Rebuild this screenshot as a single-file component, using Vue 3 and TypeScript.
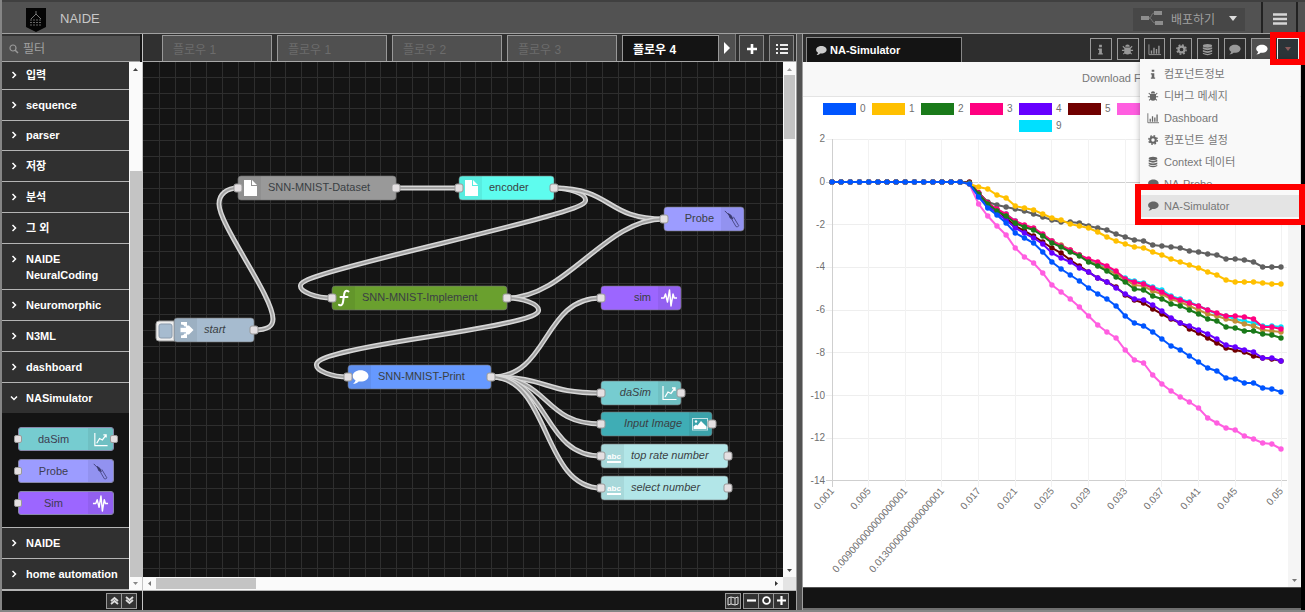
<script setup lang="ts">
import { ref } from 'vue'

interface FlowNode {
  id: string
  label: string
  x: number
  y: number
  w: number
  color: string
  icon: string
  side: 'left' | 'right'
  italic?: boolean
  input?: boolean
  output?: boolean
}

const NODE_W = 79
const NODE_H = 24
const GRID = 15.83

const nodes: FlowNode[] = [
  { id: 'start', label: 'start', x: 31, y: 256, w: 80, color: '#a6bbcf', icon: 'inject', side: 'left', italic: true, output: true },
  { id: 'dataset', label: 'SNN-MNIST-Dataset', x: 95, y: 114, w: 158, color: '#999999', icon: 'file', side: 'left', input: true, output: true },
  { id: 'encoder', label: 'encoder', x: 316, y: 114, w: 95, color: '#5efcee', icon: 'file', side: 'left', input: true, output: true },
  { id: 'probe', label: 'Probe', x: 521, y: 145, w: 80, color: '#9c9cff', icon: 'probe', side: 'right', input: true },
  { id: 'implement', label: 'SNN-MNIST-Implement', x: 189, y: 224, w: 175, color: '#6aa02e', icon: 'fn', side: 'left', input: true, output: true },
  { id: 'sim', label: 'sim', x: 458, y: 224, w: 80, color: '#9c66ff', icon: 'pulse', side: 'right', input: true },
  { id: 'print', label: 'SNN-MNIST-Print', x: 205, y: 303, w: 143, color: '#6699ff', icon: 'comment', side: 'left', input: true, output: true },
  { id: 'dasim', label: 'daSim', x: 458, y: 319, w: 80, color: '#76ccd0', icon: 'chart', side: 'right', italic: true, input: true, output: true },
  { id: 'image', label: 'Input Image', x: 458, y: 350, w: 111, color: '#3fadb5', icon: 'image', side: 'right', italic: true, input: true, output: true },
  { id: 'top', label: 'top rate number', x: 458, y: 382, w: 127, color: '#b2e6e8', icon: 'abc', side: 'left', italic: true, input: true, output: true },
  { id: 'select', label: 'select number', x: 458, y: 414, w: 127, color: '#b2e6e8', icon: 'abc', side: 'left', italic: true, input: true, output: true },
]

const links: [string, string][] = [
  ['start', 'dataset'], ['dataset', 'encoder'], ['encoder', 'implement'], ['encoder', 'probe'],
  ['implement', 'probe'], ['implement', 'print'], ['print', 'sim'], ['print', 'dasim'],
  ['print', 'image'], ['print', 'top'], ['print', 'select'],
]

function wire(ox: number, oy: number, tx: number, ty: number): string {
  const dx = tx - ox
  const dy = ty - oy
  const delta = Math.sqrt(dx * dx + dy * dy)
  if (dx > 0) {
    const s = delta < NODE_W ? 0.75 - 0.75 * ((NODE_W - delta) / NODE_W) : 0.75
    return `M${ox} ${oy}C${ox + NODE_W * s} ${oy} ${tx - NODE_W * s} ${ty} ${tx} ${ty}`
  }
  const s = 0.4 - 0.2 * Math.max(0, (NODE_W - Math.min(Math.abs(dx), Math.abs(dy))) / NODE_W)
  const down = dy > 0
  const sign = down ? 1 : -1
  const near = down ? Math.min : Math.max
  const far = down ? Math.max : Math.min
  const midX = Math.floor(tx - dx / 2)
  const midY = Math.floor(ty - dy / 2)
  const h = NODE_H / 2
  const y1 = (ty + midY) / 2
  const topX = ox + NODE_W * s
  const topY = near(y1 - dy / 2, oy + sign * h)
  const botX = tx - NODE_W * s
  const botY = far(y1, ty - sign * h)
  const x1 = (ox + topX) / 2
  let c1 = far(oy, topY - sign * h)
  const c2 = near(midY, topY + sign * h)
  let c3 = far(midY, botY - sign * h)
  if (c2 === topY + sign * h) {
    if (Math.abs(dy) < h * 10) c1 = topY - (sign * h) / 2
    c3 = botY - (sign * h) / 2
  }
  return `M${ox} ${oy}C${x1} ${oy} ${topX} ${c1} ${topX} ${topY}S${x1} ${c2} ${midX} ${midY}S${botX} ${c3} ${botX} ${botY}S${(tx + botX) / 2} ${ty} ${tx} ${ty}`
}

const byId = (id: string) => nodes.find((n) => n.id === id)!
const wires = links.map(([a, b]) => {
  const s = byId(a)
  const t = byId(b)
  // The steep return link from start runs nearly straight between its two bends
  if (a === 'start') {
    return 'M111 268C122 268 130 266 130 257C130 234 76 163 76 142C76 132 84 126 95 126'
  }
  return wire(s.x + s.w, s.y + 12, t.x, t.y + 12)
})
const gridLines = Array.from({ length: 120 }, (_, i) => Math.round((i + 1) * GRID))

const tabs = ['플로우 1', '플로우 1', '플로우 2', '플로우 3']
const filter = ref('')

const categories = [
  { name: '입력' }, { name: 'sequence' }, { name: 'parser' }, { name: '저장' }, { name: '분석' },
  { name: '그 외' }, { name: 'NAIDE NeuralCoding', tall: true }, { name: 'Neuromorphic' },
  { name: 'N3ML' }, { name: 'dashboard' }, { name: 'NASimulator', open: true },
  { name: 'NAIDE' }, { name: 'home automation' },
] as { name: string; tall?: boolean; open?: boolean }[]

const paletteNodes = [
  { label: 'daSim', color: '#76ccd0', icon: 'chart', output: true },
  { label: 'Probe', color: '#9c9cff', icon: 'probe', output: false },
  { label: 'Sim', color: '#9c66ff', icon: 'pulse', output: false },
]

const panelTabs = [
  { icon: 'info', label: '컴포넌트정보' },
  { icon: 'bug', label: '디버그 메세지' },
  { icon: 'bars', label: 'Dashboard' },
  { icon: 'cog', label: '컴포넌트 설정' },
  { icon: 'db', label: 'Context 데이터' },
  { icon: 'comment', label: 'NA-Probe' },
  { icon: 'comment', label: 'NA-Simulator' },
]

/* Chart geometry: one sample per millisecond step, fifty samples */
const X0 = 29
const X1 = 478
const xAt = (i: number) => X0 + ((X1 - X0) * i) / 49
const yAt = (v: number) => 85 - v * 21.35
const yTicks = [2, 0, -2, -4, -6, -8, -10, -12, -14]
const xTicks = [
  [0, '0.001'], [4, '0.005'], [8, '0.009000000000000001'], [12, '0.013000000000000001'],
  [16, '0.017'], [20, '0.021'], [24, '0.025'], [28, '0.029'], [32, '0.033'], [36, '0.037'],
  [40, '0.041'], [44, '0.045'], [49, '0.05'],
] as [number, string][]

const palette = ['#0055ff', '#ffc000', '#1a7a1a', '#ff0080', '#6600ff', '#700000', '#ff5ee0', '#606060', '#c09038', '#00e0ff']

/* Plot heights from sample 15 on; earlier samples rest at zero */
const traces: number[][] = [
  [184, 197, 208, 215, 223, 233, 238, 243, 252, 262, 269, 275, 281, 288, 294, 299, 306, 316, 323, 326, 332, 339, 346, 350, 356, 362, 368, 371, 378, 379, 383, 383, 388, 389, 392],
  [184, 187, 189, 195, 198, 206, 208, 210, 214, 218, 220, 224, 226, 228, 232, 237, 241, 244, 247, 248, 252, 255, 259, 262, 265, 268, 272, 275, 280, 282, 282, 282, 283, 284, 284],
  [183, 194, 204, 211, 216, 223, 227, 230, 236, 243, 247, 252, 256, 262, 266, 271, 277, 282, 289, 290, 296, 299, 304, 306, 310, 314, 319, 321, 327, 328, 331, 331, 334, 335, 338],
  [183, 193, 203, 209, 214, 221, 225, 228, 234, 241, 246, 250, 255, 259, 262, 266, 271, 279, 282, 284, 288, 292, 297, 300, 303, 306, 310, 313, 316, 316, 317, 319, 327, 327, 329],
  [183, 196, 206, 213, 220, 228, 233, 238, 244, 253, 258, 262, 268, 272, 278, 282, 288, 294, 299, 300, 305, 311, 318, 323, 326, 330, 334, 339, 345, 347, 350, 352, 358, 358, 361],
  [182, 193, 203, 210, 218, 226, 231, 236, 242, 248, 253, 260, 266, 272, 278, 282, 287, 295, 300, 303, 309, 314, 319, 323, 329, 333, 338, 343, 348, 350, 352, 356, 358, 359, 361],
  [184, 204, 216, 226, 235, 248, 257, 263, 273, 285, 292, 299, 307, 316, 325, 332, 338, 350, 360, 363, 375, 384, 391, 397, 402, 408, 418, 423, 428, 430, 436, 439, 443, 444, 449],
  [183, 193, 202, 205, 207, 209, 211, 214, 217, 220, 222, 222, 223, 226, 228, 230, 234, 237, 240, 241, 245, 246, 247, 248, 251, 252, 254, 255, 259, 259, 260, 262, 267, 267, 267],
  [183, 193, 203, 210, 215, 222, 226, 229, 235, 241, 245, 250, 255, 261, 265, 269, 274, 280, 285, 286, 291, 294, 299, 302, 306, 310, 314, 316, 319, 321, 324, 326, 330, 331, 332],
  [183, 193, 203, 210, 214, 221, 226, 229, 235, 241, 246, 251, 255, 260, 263, 267, 272, 278, 281, 283, 287, 290, 296, 299, 302, 306, 310, 314, 316, 319, 321, 323, 326, 326, 327],
]
const series = traces
  .map((t, n) => {
    const pts = [...Array(15).fill(182), ...t].map((y, i) => [xAt(i), y - 97] as [number, number])
    return { color: palette[n], pts, line: pts.map((p) => p.join(',')).join(' ') }
  })
  .reverse()

const legend = palette.map((color, n) => ({
  color,
  n,
  x: n < 9 ? 20 + n * 49 : 216,
  y: n < 9 ? 6 : 23,
}))
</script>

<template>
  <svg class="defs" aria-hidden="true">
    <symbol id="file" viewBox="0 0 16 18"><path d="M2 1h7v6h6v10H2z M10 1l5 5h-5z" fill="#fff" /></symbol>
    <symbol id="fn" viewBox="0 0 16 18"><path d="M12.500 2.500c-2-1.500-3.800-.5-4.200 2L7 13c-.4 3-2 4-4 2.800M4.500 8h7" fill="none" stroke="#fff" stroke-width="2" stroke-linecap="round" /></symbol>
    <symbol id="comment" viewBox="0 0 16 14"><path d="M8.500 1C4.500 1 1.500 3.200 1.500 6c0 1.700 1 3 2.500 3.900C3.800 11.300 2.800 12.300 1.800 13c2 0 3.800-.8 5-2.100l1.700.1c4 0 7-2.200 7-5s-3-5-7-5z" fill="currentColor" /></symbol>
    <symbol id="inject" viewBox="0 0 16 18"><path d="M3 1h6v3.500h2L15.500 9 11 13.500H9V17H3v-2.500c2.500 0 3.500-1 3.500-3H2.500v-5h4c0-2-1-3-3.500-3z" fill="#fff" /><path d="M2 6.200h6M2 11.800h6" stroke="#a6bbcf" stroke-width="1.200" /></symbol>
    <symbol id="chart" viewBox="0 0 16 18"><path d="M2 2v13.500h13.500" fill="none" stroke="#fff" stroke-width="1.200" /><path d="M4 13l3-5 3 1.500L14 4M11 4h3v3" fill="none" stroke="#fff" stroke-width="1.300" /></symbol>
    <symbol id="probe" viewBox="0 0 18 20"><path d="M1 1l5 5" stroke="#39396b" stroke-width="1" /><path d="M5 4l3 2 2 4-3-1z" fill="#39396b" stroke="#39396b" /><path d="M8 9l5.500 9.500q2 1 3-1L10.500 7.500" fill="none" stroke="#4a4a88" stroke-width="1.100" /></symbol>
    <symbol id="pulse" viewBox="0 0 18 18"><path d="M1 9h3l1.500-4 2 8L9.500 1l1.500 16 2-12 1.200 4H17" fill="none" stroke="#fff" stroke-width="1.500" stroke-linejoin="round" /></symbol>
    <symbol id="image" viewBox="0 0 18 18"><rect x="1.500" y="3.500" width="15" height="11.500" fill="none" stroke="#fff" stroke-opacity=".7" /><path d="M2.500 14v-2.500L5 9.500l1.500 1L10 6l5.500 5.500V14z" fill="#fff" /><circle cx="5" cy="6.500" r="1.200" fill="#fff" /></symbol>
    <symbol id="chevron" viewBox="0 0 8 8"><path d="M2.500 1l3 3-3 3" fill="none" stroke="currentColor" stroke-width="1.500" /></symbol>
    <symbol id="chevron-down" viewBox="0 0 8 8"><path d="M1 2.500l3 3 3-3" fill="none" stroke="currentColor" stroke-width="1.500" /></symbol>
    <symbol id="info" viewBox="0 0 14 14"><path d="M5.500 2h3v2.500h-3zM4.500 6h4v5h1v1.500h-5V11h1V7.500h-1z" fill="currentColor" /></symbol>
    <symbol id="bug" viewBox="0 0 14 14"><path d="M4.500 4a2.500 2.500 0 0 1 5 0z" fill="currentColor" /><path d="M3.500 4.800h7V9a3.500 3.500 0 0 1-7 0z" fill="currentColor" /><path d="M2 3.500l2 2M12 3.500l-2 2M1 8h3M13 8h-3M2.500 12l2-2M11.500 12l-2-2" stroke="currentColor" stroke-width="1.200" /></symbol>
    <symbol id="bars" viewBox="0 0 14 14"><path d="M1 1.500V12.500H14" fill="none" stroke="currentColor" /><path d="M3 8h1.500v3.500H3zM5.700 5h1.500v6.500H5.700zM8.400 6.500h1.500v5H8.400zM11 3h1.500v8.500H11z" fill="currentColor" /></symbol>
    <symbol id="cog" viewBox="0 0 14 14"><circle cx="7" cy="7" r="3.200" fill="none" stroke="currentColor" stroke-width="2.400" /><circle cx="7" cy="7" r="5" fill="none" stroke="currentColor" stroke-width="1.600" stroke-dasharray="2 1.930" /></symbol>
    <symbol id="db" viewBox="0 0 14 14"><ellipse cx="7" cy="3" rx="5" ry="2" fill="currentColor" /><path d="M2 4.500q5 2.500 10 0V6.500q-5 2.500-10 0zM2 7.500q5 2.500 10 0V9.500q-5 2.500-10 0zM2 10.500q5 2.500 10 0v1.200q-5 3-10 0z" fill="currentColor" /></symbol>
  </svg>

  <div class="app">
    <header class="header">
      <svg class="logo" width="20" height="24" viewBox="0 0 20 24">
        <path d="M0 0h20v19l-10 5-10-5z" fill="#050505" />
        <path d="M10 3v3M10 6l-5 5M10 6l5 5" fill="none" stroke="#777" />
        <path d="M4 12h12M4 14.500h12M4 17h12" stroke="#666" stroke-width="1.200" stroke-dasharray="2 1" />
      </svg>
      <h1 class="brand">NAIDE</h1>
      <button class="deploy" type="button">
        <svg width="22" height="16" viewBox="0 0 22 16"><path d="M0 6h8v4H0zM13 1h8v4h-8zM14 11h8v4h-8z" fill="#8d8d8d" /><path d="M8 8c3 0 2-5 5-5M8 8c3 0 3 5 6 5" fill="none" stroke="#777" /></svg>
        <span>배포하기</span>
        <svg class="caret" width="8" height="5" viewBox="0 0 8 5"><path d="M0 0h8L4 5z" fill="#ddd" /></svg>
      </button>
      <button class="burger" type="button" aria-label="메뉴">
        <svg width="14" height="12" viewBox="0 0 14 12"><path d="M0 1.500h14M0 6h14M0 10.500h14" stroke="#d6d6d6" stroke-width="2.400" /></svg>
      </button>
    </header>

    <div class="main">
      <nav class="palette">
        <label class="search">
          <svg width="10" height="10" viewBox="0 0 10 10"><circle cx="4" cy="4" r="3" fill="none" stroke="#999" stroke-width="1.200" /><path d="M6 6l3 3" stroke="#999" stroke-width="1.500" /></svg>
          <input v-model="filter" type="text" placeholder="필터" aria-label="필터" />
        </label>
        <div class="palette-body">
          <div class="cats">
            <template v-for="(c, i) in categories" :key="i">
              <button type="button" class="cat" :class="{ tall: c.tall, open: c.open, first: i === 0 }">
                <svg width="8" height="8"><use :href="c.open ? '#chevron-down' : '#chevron'" /></svg>
                <span>{{ c.name }}</span>
              </button>
              <div v-if="c.open" class="cat-nodes">
                <div v-for="p in paletteNodes" :key="p.label" class="pnode" :style="{ background: p.color }">
                  <span class="port in"></span>
                  <span class="plabel">{{ p.label }}</span>
                  <span class="picon"><svg width="17" height="17"><use :href="'#' + p.icon" /></svg></span>
                  <span v-if="p.output" class="port out"></span>
                </div>
              </div>
            </template>
          </div>
          <div class="vbar">
            <svg width="13" height="16" viewBox="0 0 13 16"><path d="M4 9h5L6.500 6z" fill="#444" /></svg>
            <div class="thumb palette-thumb"></div>
            <svg width="13" height="13" viewBox="0 0 13 13"><path d="M4 5h5L6.500 8z" fill="#888" /></svg>
          </div>
        </div>
        <div class="foot foot-left">
          <div class="group">
            <button type="button" aria-label="모두 접기"><svg width="9" height="9" viewBox="0 0 9 9"><path d="M1 5l3.500-3L8 5M1 8l3.500-3L8 8" fill="none" stroke="#ddd" stroke-width="1.800" /></svg></button>
            <button type="button" aria-label="모두 펼치기"><svg width="9" height="9" viewBox="0 0 9 9"><path d="M1 1l3.500 3L8 1M1 4l3.500 3L8 4" fill="none" stroke="#ddd" stroke-width="1.800" /></svg></button>
          </div>
        </div>
      </nav>

      <main class="workspace">
        <div class="tabs">
          <div class="tablist">
            <button v-for="(t, i) in tabs" :key="i" type="button" class="tab">{{ t }}</button>
            <button type="button" class="tab active">플로우 4</button>
          </div>
          <button type="button" class="scroll-tab" aria-label="다음"><svg width="6" height="12" viewBox="0 0 6 12"><path d="M0 0l6 6-6 6z" fill="#fff" /></svg></button>
          <button type="button" class="tabbtn" aria-label="추가"><svg width="10" height="10" viewBox="0 0 10 10"><path d="M5 0v10M0 5h10" stroke="#fff" stroke-width="2.600" /></svg></button>
          <button type="button" class="tabbtn" aria-label="목록"><svg width="12" height="10" viewBox="0 0 12 10"><path d="M0 1h2M0 5h2M0 9h2M4 1h8M4 5h8M4 9h8" stroke="#eee" stroke-width="2" /></svg></button>
        </div>
        <div class="canvas-row">
          <svg class="canvas">
            <g stroke="#2e2e2e" shape-rendering="crispEdges">
              <line v-for="g in gridLines" :key="'v' + g" :x1="g" :x2="g" y1="0" y2="2000" />
              <line v-for="g in gridLines" :key="'h' + g" x1="0" x2="2000" :y1="g - 1" :y2="g - 1" />
            </g>
            <g v-for="(w, i) in wires" :key="i" fill="none">
              <path :d="w" stroke="#d8d8d8" stroke-width="5" />
              <path :d="w" stroke="#a2a2a2" stroke-width="2" />
            </g>
            <g>
              <rect x="13" y="259" width="26" height="20" rx="3" fill="#eee" stroke="#999" />
              <rect x="16" y="262" width="13" height="14" rx="2" fill="#a6bbcf" stroke="#8a9aac" />
            </g>
            <g v-for="n in nodes" :key="n.id" :transform="`translate(${n.x} ${n.y})`">
              <rect :width="n.w" :height="NODE_H" rx="3" :fill="n.color" stroke="#777" stroke-opacity=".6" />
              <rect :x="n.side === 'left' ? 0 : n.w - 23" width="23" :height="NODE_H" fill="#000" fill-opacity=".06" />
              <g v-if="n.icon === 'abc'">
                <text class="abc" x="13" y="15" text-anchor="middle">abc</text>
                <path d="M6 18h14" stroke="#fff" stroke-width="2" />
              </g>
              <use v-else :href="'#' + n.icon" :x="n.side === 'left' ? 3 : n.w - 21" y="3" width="18" height="18" color="#fff" />
              <text
                class="nlabel"
                :class="{ italic: n.italic }"
                :x="n.side === 'left' ? 30 : n.w - 30"
                y="15"
                :text-anchor="n.side === 'left' ? 'start' : 'end'"
              >{{ n.label }}</text>
              <rect v-if="n.input" x="-4" y="8" width="8" height="8" rx="2" fill="#e4e0e2" stroke="#999" />
              <rect v-if="n.output" :x="n.w - 4" y="8" width="8" height="8" rx="2" fill="#e4e0e2" stroke="#999" />
            </g>
          </svg>
          <div class="vbar">
            <svg width="13" height="13" viewBox="0 0 13 13"><path d="M4 9h5L6.500 6z" fill="#999" /></svg>
            <div class="thumb canvas-thumb"></div>
            <svg class="push" width="13" height="13" viewBox="0 0 13 13"><path d="M4 5h5L6.500 8z" fill="#444" /></svg>
          </div>
        </div>
        <div class="hbar">
          <svg width="13" height="13" viewBox="0 0 13 13"><path d="M8 4v5L5 6.500z" fill="#777" /></svg>
          <div class="hthumb"></div>
          <svg class="hpush" width="13" height="13" viewBox="0 0 13 13"><path d="M5 4v5l3-2.500z" fill="#333" /></svg>
          <span class="corner"></span>
        </div>
        <div class="foot foot-mid">
          <div class="group">
            <button type="button" aria-label="지도"><svg width="12" height="10" viewBox="0 0 12 10"><path d="M1 2l3-1 4 1 3-1v7L8 9 4 8 1 9zM4 1v7M8 2v7" fill="none" stroke="#ddd" /></svg></button>
          </div>
          <div class="group">
            <button type="button" aria-label="축소"><svg width="9" height="9" viewBox="0 0 9 9"><path d="M0 4.500h9" stroke="#fff" stroke-width="2.200" /></svg></button>
            <button type="button" aria-label="원래 크기"><svg width="9" height="9" viewBox="0 0 9 9"><circle cx="4.500" cy="4.500" r="3.400" fill="none" stroke="#fff" stroke-width="1.800" /></svg></button>
            <button type="button" aria-label="확대"><svg width="9" height="9" viewBox="0 0 9 9"><path d="M0 4.500h9M4.500 0v9" stroke="#fff" stroke-width="2.200" /></svg></button>
          </div>
        </div>
      </main>

      <div class="separator"></div>

      <aside class="panel">
        <div class="panel-tabs">
          <div class="panel-title">
            <svg width="12" height="11" color="#ccc"><use href="#comment" /></svg>
            <span>NA-Simulator</span>
          </div>
          <div class="panel-btns">
            <button v-for="(p, i) in panelTabs" :key="i" type="button" :class="{ on: i === 6 }" :aria-label="p.label">
              <svg width="13" height="13"><use :href="'#' + p.icon" /></svg>
            </button>
            <button type="button" class="more" aria-label="더 보기"><svg width="6" height="4" viewBox="0 0 6 4"><path d="M0 0h6L3 4z" fill="#8a5a5a" /></svg></button>
          </div>
        </div>
        <div class="toolbar"><a href="#">Download F</a></div>
        <div class="panel-body">
          <svg class="chart" width="485" height="490" role="img" aria-label="NA-Simulator">
            <g v-for="l in legend" :key="l.n">
              <rect :x="l.x" :y="l.y" width="33" height="12" :fill="l.color" />
              <text :x="l.x + 37" :y="l.y + 9" class="tick">{{ l.n }}</text>
            </g>
            <g shape-rendering="crispEdges">
              <line v-for="t in yTicks" :key="t" x1="23" :x2="X1 + 6" :y1="yAt(t)" :y2="yAt(t)" :stroke="t === 0 || t === -14 ? '#cfcfcf' : '#eeeeee'" />
              <line v-for="[i] in xTicks" :key="i" :x1="xAt(i)" :x2="xAt(i)" y1="42" y2="390" :stroke="i === 0 ? '#cfcfcf' : '#f2f2f2'" />
            </g>
            <text v-for="t in yTicks" :key="'y' + t" class="tick" x="22" :y="yAt(t) + 3" text-anchor="end">{{ t }}</text>
            <text
              v-for="[i, s] in xTicks"
              :key="'x' + i"
              class="tick"
              text-anchor="end"
              dominant-baseline="central"
              :transform="`translate(${xAt(i)} 392) rotate(-49)`"
            >{{ s }}</text>
            <g v-for="s in series" :key="s.color">
              <polyline :points="s.line" fill="none" :stroke="s.color" stroke-width="2" />
              <circle v-for="(p, i) in s.pts" :key="i" :cx="p[0]" :cy="p[1]" r="2.700" :fill="s.color" />
            </g>
          </svg>
          <div class="vbar pale"><svg class="push" width="13" height="13" viewBox="0 0 13 13"><path d="M4 5h5L6.500 8z" fill="#777" /></svg></div>
        </div>
        <div class="foot foot-right"></div>

        <ul class="menu">
          <li v-for="(p, i) in panelTabs" :key="i">
            <button type="button" :class="{ selected: i === 6 }">
              <svg width="12" height="12"><use :href="'#' + p.icon" /></svg>
              <span>{{ p.label }}</span>
            </button>
          </li>
        </ul>
        <div class="mark mark-button"></div>
        <div class="mark mark-item"></div>
      </aside>
      <div class="edge"></div>
    </div>
  </div>
</template>

<style>
body {
  margin: 0;
  background: #141414;
}
</style>

<style scoped>
.defs {
  position: absolute;
  width: 0;
  height: 0;
}
.app {
  box-sizing: border-box;
  height: 100vh;
  display: flex;
  flex-direction: column;
  border-left: 2px solid #858585;
  border-bottom: 2px solid #858585;
  font-family: "Liberation Sans", "Noto Sans CJK KR", sans-serif;
  font-size: 11px;
  color: #fff;
  background: #141414;
  overflow: hidden;
}
.app *,
.app *::before {
  box-sizing: border-box;
}
button {
  font: inherit;
  color: inherit;
  border: 0;
  padding: 0;
  margin: 0;
  background: none;
  display: flex;
  align-items: center;
  justify-content: center;
}
.header {
  flex: 0 0 34px;
  display: flex;
  align-items: center;
  padding-left: 24px;
  background: #525252;
  border-top: 2px solid #404040;
  border-bottom: 1px solid #a0a0a0;
}
.logo {
  margin-top: 5px;
}
.brand {
  margin: 2px auto 0 14px;
  font-size: 13px;
  font-weight: 400;
  color: #c8c8c8;
}
.deploy {
  width: 112px;
  height: 23px;
  margin: 3px 16px 0 0;
  padding-bottom: 2px;
  gap: 8px;
  background: #474747;
  color: #a0a0a0;
  font-size: 12px;
}
.deploy .caret {
  margin-left: 6px;
}
.burger {
  width: 37px;
  align-self: stretch;
  border-left: 2px solid #222;
  border-right: 2px solid #222;
  margin-right: 7px;
  padding-top: 2px;
}
.main {
  flex: 1;
  min-height: 0;
  display: flex;
}

.palette {
  flex: 0 0 141px;
  display: flex;
  flex-direction: column;
  border-right: 1px solid #c4c4c4;
}
.search {
  flex: 0 0 28px;
  display: flex;
  align-items: center;
  gap: 4px;
  margin-right: 2px;
  padding-left: 7px;
  background: #505050;
  border-top: 2px solid #333;
  border-bottom: 1px solid #a8a8a8;
}
.search input {
  width: 100px;
  border: 0;
  padding: 0;
  background: none;
  font: inherit;
  font-size: 12px;
  color: #ddd;
}
.search input::placeholder {
  color: #a0a0a0;
}
.palette-body {
  flex: 1;
  min-height: 0;
  display: flex;
}
.cats {
  flex: 1;
  display: flex;
  flex-direction: column;
  overflow: hidden;
}
.cat {
  flex: 0 1 31px;
  justify-content: flex-start;
  gap: 8px;
  padding: 0 4px 0 8px;
  background: #303030;
  border-bottom: 1px solid #b4b4b4;
  font-weight: 700;
  line-height: 16px;
  text-align: left;
}
.cat.first {
  flex-basis: 28px;
}
.cat.tall {
  flex-basis: 47px;
}
.cat.tall svg {
  margin-bottom: 16px;
}
.cat.open {
  border-bottom: 0;
}
.cat svg {
  flex: none;
}
.cat-nodes {
  flex: 0 0 115px;
  padding: 14px 15px 0 16px;
  display: flex;
  flex-direction: column;
  gap: 8px;
  background: #141414;
  border-bottom: 1px solid #b4b4b4;
}
.pnode {
  position: relative;
  height: 24px;
  display: flex;
  border-radius: 3px;
  border: 1px solid #8888aa;
  color: #3c3c50;
}
.plabel {
  flex: 1;
  text-align: center;
  line-height: 22px;
}
.picon {
  width: 25px;
  display: flex;
  align-items: center;
  justify-content: center;
  background: rgba(0, 0, 0, 0.06);
}
.port {
  position: absolute;
  top: 7px;
  width: 8px;
  height: 8px;
  border-radius: 2px;
  background: #e4e0e2;
  border: 1px solid #999;
}
.port.in {
  left: -5px;
}
.port.out {
  right: -5px;
}
.vbar {
  flex: 0 0 13px;
  display: flex;
  flex-direction: column;
  align-items: center;
  background: #fafafa;
}
.vbar svg {
  flex: none;
}
.vbar.pale {
  background: #f5f5f5;
}
.thumb {
  width: 11px;
  background: #c4c4c4;
}
.palette-thumb {
  width: 12px;
  flex: 1;
  margin-top: 93px;
}
.canvas-thumb {
  height: 64px;
}
.push {
  margin-top: auto;
}
.foot {
  flex: 0 0 20px;
  display: flex;
  align-items: center;
  justify-content: flex-end;
  background: #141414;
  border-top: 1px solid #b4b4b4;
}
.foot-left {
  padding-right: 5px;
}
.foot-mid {
  padding-right: 7px;
  gap: 2px;
}
.foot-right {
  border-top-color: #555;
  flex-basis: 23px;
  border-bottom: 2px solid #707070;
}
.group {
  display: flex;
  border: 1px solid #999;
  background: #333;
}
.group button {
  width: 14px;
  height: 14px;
}
.group button + button {
  width: 15px;
  border-left: 1px solid #999;
}

.workspace {
  flex: 1;
  min-width: 0;
  display: flex;
  flex-direction: column;
}
.tabs {
  flex: 0 0 28px;
  display: flex;
  align-items: flex-end;
  background: #303030;
  border-bottom: 1px solid #a8a8a8;
  padding-right: 2px;
}
.tablist {
  flex: 1;
  min-width: 0;
  display: flex;
  gap: 5px;
  padding-left: 19px;
}
.tab {
  flex: 0 0 110px;
  height: 26px;
  justify-content: flex-start;
  padding-left: 10px;
  background: #505050;
  border: 1px solid #999;
  border-bottom: 0;
  font-size: 12px;
  color: #6c6c6c;
}
.tab.active {
  flex: 1 1 96px;
  background: #141414;
  color: #fff;
  font-weight: 700;
  margin-bottom: -1px;
}
.scroll-tab {
  width: 17px;
  height: 27px;
  background: #505050;
  border-right: 1px solid #777;
}
.tabbtn {
  width: 25px;
  height: 26px;
  margin-left: 3px;
  background: #404040;
  border: 1px solid #888;
  border-bottom: 0;
}
.tabbtn + .tabbtn {
  margin-left: 5px;
}
.canvas-row {
  flex: 1;
  min-height: 0;
  display: flex;
}
.canvas {
  flex: 1;
  min-width: 0;
  height: 100%;
  background: #141414;
}
.nlabel {
  font-size: 11px;
  fill: #3a3f44;
}
.italic {
  font-style: italic;
}
.abc {
  font-size: 8px;
  font-weight: 700;
  fill: #fff;
}
.hbar {
  flex: 0 0 13px;
  display: flex;
  align-items: center;
  background: #fafafa;
}
.hthumb {
  width: 100px;
  height: 11px;
  background: #c4c4c4;
}
.hpush {
  margin-left: auto;
}
.corner {
  width: 13px;
  height: 13px;
  background: #e4e4e4;
}
.separator {
  flex: 0 0 7px;
  background: #525252;
  border-left: 1px solid #a0a0a0;
  border-right: 1px solid #a0a0a0;
}

.panel {
  position: relative;
  flex: 0 0 498px;
  display: flex;
  flex-direction: column;
}
.panel-tabs {
  flex: 0 0 28px;
  display: flex;
  align-items: flex-end;
  justify-content: space-between;
  padding: 0 2px 0 3px;
  background: #2e2e2e;
}
.panel-title {
  width: 156px;
  height: 25px;
  display: flex;
  align-items: center;
  gap: 3px;
  padding-left: 8px;
  background: #141414;
  border: 1px solid #888;
  border-bottom: 0;
  font-weight: 700;
}
.panel-btns {
  width: 209px;
  display: flex;
  gap: 5px;
  margin-bottom: 2px;
}
.panel-btns button {
  flex: 1;
  height: 22px;
  border: 1px solid #999;
  color: #999;
}
.panel-btns .on {
  color: #fff;
  background: #505050;
}
.panel-btns .more {
  background: #2c3438;
  border-color: #eee;
}
.toolbar {
  flex: 0 0 35px;
  padding: 0 0 0 279px;
  line-height: 33px;
  background: #f8f8f8;
  border-bottom: 1px solid #e4e4e4;
}
.toolbar a {
  color: #777;
  text-decoration: none;
}
.panel-body {
  flex: 1;
  min-height: 0;
  display: flex;
  justify-content: space-between;
  background: #fff;
  overflow: hidden;
}
.chart {
  flex: none;
}
.tick {
  font-size: 10px;
  fill: #707070;
}
.menu {
  position: absolute;
  top: 25px;
  right: 1px;
  width: 160px;
  margin: 0;
  padding: 4px 0 2px;
  list-style: none;
  background: #f9f9f9;
  color: #777;
  box-shadow: 0 2px 6px rgba(0, 0, 0, 0.3);
}
.menu button {
  width: 100%;
  height: 22px;
  justify-content: flex-start;
  gap: 5px;
  padding-left: 7px;
}
.menu span {
  line-height: 16px;
}
.menu .selected {
  background: #e4e4e4;
}
.menu svg {
  color: #666;
}
.mark {
  position: absolute;
  border: 6px solid #f00;
}
.mark-button {
  top: -2px;
  right: -4px;
  width: 35px;
  height: 33px;
}
.mark-item {
  top: 150px;
  right: -4px;
  width: 170px;
  height: 41px;
}
.edge {
  flex: 1 0 4px;
  max-width: 4px;
  background: #000;
}
</style>
